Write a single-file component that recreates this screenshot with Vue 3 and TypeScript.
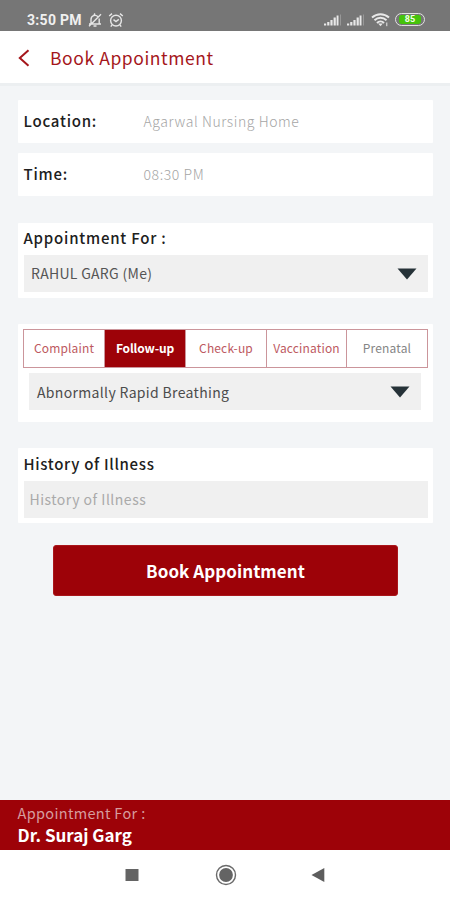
<script setup lang="ts">
import { ref } from 'vue'

interface Detail {
  label: string
  value: string
}

const details: Detail[] = [
  { label: 'Location:', value: 'Agarwal Nursing Home' },
  { label: 'Time:', value: '08:30 PM' },
]

const tabs: string[] = ['Complaint', 'Follow-up', 'Check-up', 'Vaccination', 'Prenatal']
const activeTab = ref('Follow-up')
</script>

<template>
  <div class="screen">
    <div class="status">
      <span class="clock">3:50 PM</span>
      <svg class="bell" width="16" height="16" viewBox="0 0 16 16" fill="none" stroke="#e6e6e6" stroke-width="1.4">
        <path d="M2 12h12M4 11.5V7.5a4 4 0 0 1 7-2.7M12.2 6.5v5M6.5 14h3M2 14.2L14 2.2M7 3l1-1.5" />
      </svg>
      <svg class="alarm" width="16" height="16" viewBox="0 0 16 16" fill="none" stroke="#e6e6e6" stroke-width="1.4">
        <circle cx="8" cy="8.6" r="5.4" />
        <path d="M1.2 4L4 1.6M12 1.6L14.8 4M5.5 7.6L8 9.6l2.8-2.2M4 13l-1.2 1.6M12 13l1.2 1.6" />
      </svg>
      <div class="status-right">
        <svg v-for="n in 2" :key="n" class="signal" width="18" height="12" viewBox="0 0 18 12" fill="#e8e8e8">
          <path d="M0 9.5h2.2v2H0zM3.2 8h2.2v3.5H3.2zM6.4 6h2.2v5.5H6.4zM9.6 3.5h2.2v8H9.6z" />
          <path d="M12.6 1.5h1.9v10h-1.9z" />
          <path d="M16 .5h1v11h-1z" opacity=".3" />
        </svg>
        <svg class="wifi" width="19" height="14" viewBox="0 0 19 14" fill="none" stroke="#e8e8e8" stroke-width="2">
          <path d="M1 4.5C6 0 13 0 18 4.5M3.5 7.3c3.5-3.3 8.5-3.3 12 0M6 10c2-2 5-2 7 0" />
          <path d="M7.2 10.5L9.5 13.2l2.3-2.7z" fill="#e8e8e8" stroke="none" />
          <path d="M15.8 9.5v3.7" stroke-width="1" />
        </svg>
        <div class="battery"><span class="charge">85</span></div>
      </div>
    </div>

    <header class="header">
      <svg class="back" width="12" height="18" viewBox="0 0 12 18" fill="none" stroke="#a5161b" stroke-width="2">
        <path d="M10.5 1.2L1.8 9l8.7 7.8" />
      </svg>
      <h1 class="title">Book Appointment</h1>
    </header>

    <main class="content">
      <section v-for="d in details" :key="d.label" class="card detail">
        <span class="label">{{ d.label }}</span>
        <span class="value">{{ d.value }}</span>
      </section>

      <section class="card patient">
        <div class="label patient-label">Appointment For :</div>
        <div class="field">
          <span class="patient-name">RAHUL GARG (Me)</span>
          <svg class="caret" width="20" height="12" viewBox="0 0 20 12"><path d="M.5.5h19L10 11.5z" fill="#263238" /></svg>
        </div>
      </section>

      <section class="card reason">
        <div class="tabs">
          <button
            v-for="tab in tabs"
            :key="tab"
            type="button"
            class="tab"
            :class="{ active: tab === activeTab, muted: tab === 'Prenatal' }"
            @click="activeTab = tab"
          >
            {{ tab }}
          </button>
        </div>
        <div class="field symptom">
          <span class="symptom-name">Abnormally Rapid Breathing</span>
          <svg class="caret" width="20" height="12" viewBox="0 0 20 12"><path d="M.5.5h19L10 11.5z" fill="#263238" /></svg>
        </div>
      </section>

      <section class="card history">
        <div class="label history-label">History of Illness</div>
        <div class="field"><span class="placeholder">History of Illness</span></div>
      </section>

      <button type="button" class="submit">Book Appointment</button>
    </main>

    <footer class="footer">
      <div class="footer-label">Appointment For :</div>
      <div class="doctor">Dr. Suraj Garg</div>
    </footer>

    <nav class="nav">
      <svg width="14" height="14" viewBox="0 0 14 14"><path d="M.5 1h13v12H.5z" fill="#646464" /></svg>
      <svg width="22" height="22" viewBox="0 0 22 22">
        <circle cx="11" cy="11" r="9.5" fill="none" stroke="#6a6a6a" stroke-width="1.4" />
        <circle cx="11" cy="11" r="6.9" fill="#646464" />
      </svg>
      <svg width="14" height="16" viewBox="0 0 14 16"><path d="M13.3 1v14L.5 8z" fill="#5d5d5d" /></svg>
    </nav>
  </div>
</template>

<style>
body {
  margin: 0;
}
</style>

<style scoped>
.screen {
  display: flex;
  flex-direction: column;
  width: 450px;
  height: 900px;
  overflow: hidden;
  background: #f3f5f7;
  font-family: "Noto Sans CJK SC", "Open Sans", sans-serif;
  white-space: nowrap;
}
.screen * {
  box-sizing: border-box;
}
.status {
  flex: none;
  display: flex;
  align-items: center;
  height: 31px;
  padding: 8px 25px 0 27px;
  background: #767676;
}
.clock {
  width: 61px;
  color: #f0f0f0;
  font: 700 14px/20px Roboto, sans-serif;
  letter-spacing: 0.3px;
}
.bell {
  margin-left: -1px;
}
.alarm {
  margin-left: 5px;
}
.status-right {
  display: flex;
  align-items: center;
  margin-left: auto;
}
.signal {
  margin-right: 5px;
}
.signal:nth-of-type(2) {
  margin-right: 6px;
}
.wifi {
  margin-right: 5px;
}
.battery {
  width: 30px;
  height: 13px;
  padding: 0.5px 3px;
  border: 1.5px solid #e2e2e2;
  border-radius: 7px;
}
.charge {
  display: block;
  height: 9px;
  border-radius: 3px;
  background: #45c30b;
  color: #f3ffe9;
  font: 700 9px/9.5px Roboto, sans-serif;
  text-align: center;
}
.header {
  flex: none;
  display: flex;
  align-items: center;
  height: 55px;
  padding: 2px 18px 0;
  border-bottom: 3px solid #eceff1;
  background: #fff;
}
.title {
  margin: -1px 0 0 20px;
  color: #a5161b;
  font-size: 17.5px;
  font-weight: 400;
  line-height: 26px;
  letter-spacing: 0.58px;
}
.content {
  flex: 1;
  display: flex;
  flex-direction: column;
  padding: 14px 17px 0 18px;
}
.card {
  flex: none;
  background: #fff;
  border-radius: 1px;
}
.label {
  color: #202020;
  font-size: 15px;
  font-weight: 500;
  line-height: 22px;
  letter-spacing: 0.77px;
}
.detail {
  display: grid;
  grid-template-columns: 120px 1fr;
  align-items: center;
  height: 43px;
  margin-bottom: 10px;
  padding: 0 0 2px 5.5px;
}
.value {
  color: #a5a5a5;
  font-size: 14px;
  font-weight: 300;
  line-height: 22px;
  letter-spacing: 0.58px;
}
.patient {
  height: 75px;
  margin-top: 17px;
  padding: 5px 5px 0 5.5px;
}
.patient-label {
  margin-top: -1px;
}
.field {
  display: flex;
  align-items: center;
  justify-content: space-between;
  height: 37px;
  padding: 0 11px 0 7.5px;
  background: #f0f0f0;
}
.patient .field {
  margin-top: 6px;
}
.patient-name {
  margin-top: -2px;
  color: #555;
  font-size: 14px;
  line-height: 22px;
  letter-spacing: 0.3px;
}
.reason {
  height: 98px;
  margin-top: 26px;
  padding: 5px 5px 0 5px;
}
.tabs {
  display: grid;
  grid-template-columns: 81px 81px 81px 80px 80px;
  height: 39px;
  border: 1px solid #cb959b;
}
.tab {
  padding: 0 0 2px;
  border: 0;
  border-right: 1px solid #cb959b;
  background: #fff;
  color: #bd595f;
  font-family: inherit;
  font-size: 12px;
  font-weight: 400;
  letter-spacing: 0.15px;
}
.tab:last-child {
  border-right: 0;
}
.tab.muted {
  color: #858585;
}
.tab.active {
  background: #9d0208;
  color: #fff;
  font-weight: 700;
  letter-spacing: -0.15px;
}
.symptom {
  margin: 5px 7px 0 6px;
  padding-left: 8px;
}
.symptom-name {
  color: #4c4c4c;
  font-size: 14px;
  letter-spacing: 0.33px;
}
.history {
  height: 75px;
  margin-top: 26px;
  padding: 5px 5px 0 5.5px;
}
.history-label {
  letter-spacing: 0.68px;
}
.history .field {
  margin-top: 6px;
  padding-left: 6px;
}
.placeholder {
  margin-top: -2px;
  color: #aaa;
  font-size: 14px;
  letter-spacing: 0.5px;
}
.submit {
  flex: none;
  width: 345px;
  height: 51px;
  margin: 22px 0 0 35px;
  padding: 0 0 1px;
  border: 1px solid #a9161b;
  border-radius: 3px;
  background: #9d0208;
  color: #fff;
  font-family: inherit;
  font-size: 17px;
  font-weight: 700;
  letter-spacing: 0.05px;
}
.footer {
  flex: none;
  height: 50px;
  padding: 2px 17.5px 0;
  background: #9d0208;
}
.footer-label {
  color: #d69c9e;
  font-size: 14.5px;
  line-height: 22px;
  letter-spacing: 0.33px;
}
.doctor {
  color: #fff;
  font-size: 17px;
  font-weight: 700;
  line-height: 22px;
}
.nav {
  flex: none;
  display: flex;
  align-items: center;
  gap: 76px;
  height: 50px;
  padding-left: 125px;
  background: #fff;
}
.nav svg:last-child {
  margin-left: -2px;
}
</style>
